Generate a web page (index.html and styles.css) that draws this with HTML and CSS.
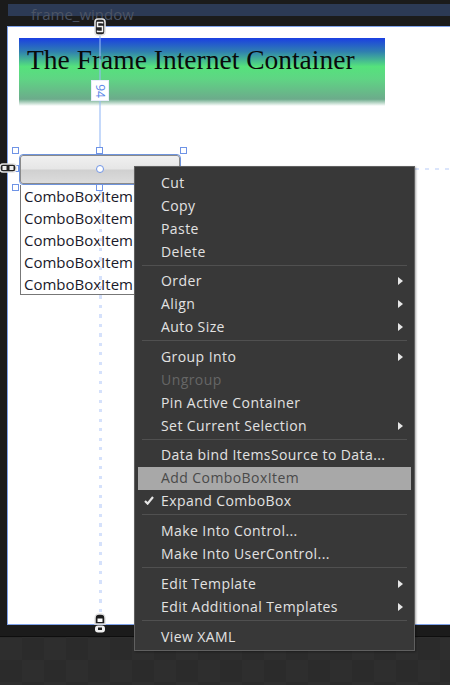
FILE: index.html
```html
<!DOCTYPE html>
<html lang="en">
<head>
<meta charset="utf-8">
<title>frame_window</title>
<link rel="stylesheet" href="styles.css">
</head>
<body>
<div class="stage">
  <div class="surface">
    <div class="title-strip"><span class="title-text">frame_window</span></div>
    <div class="artboard">
      <div class="banner"><h1 class="banner-title">The Frame Internet Container</h1></div>
      <div class="combo">
        <div class="combo-button"></div>
        <ul class="combo-list">
          <li>ComboBoxItem</li>
          <li>ComboBoxItem</li>
          <li>ComboBoxItem</li>
          <li>ComboBoxItem</li>
          <li>ComboBoxItem</li>
        </ul>
      </div>
    </div>
  </div>

  <div class="guide guide-top"></div>
  <div class="guide guide-bottom"></div>
  <div class="guide guide-right"></div>
  <div class="margin-badge"><span>94</span></div>

  <i class="handle h1"></i><i class="handle h2"></i><i class="handle h3"></i>
  <i class="handle h4"></i><i class="handle h5"></i><i class="handle h6"></i>
  <i class="center-dot"></i>

  <svg class="pin pin-top" viewBox="0 0 12 18" width="12" height="18"><rect x="1" y="1" width="10" height="16" rx="3" fill="#222" stroke="#e4e4e4" stroke-width="1.6"/><path d="M8.500 5.500V4.500H3.500V8.500H8.500V13.500H3.500V12.500" fill="none" stroke="#f4f4f4" stroke-width="1.500"/></svg>
  <svg class="pin pin-left" viewBox="0 0 17 10" width="17" height="10"><rect x="0" y="1" width="16" height="8" rx="3" fill="#222" stroke="#e4e4e4" stroke-width="1.4"/><path d="M2.500 3h4v4h-4zM9.500 3h4v4h-4z" fill="#eee"/></svg>
  <svg class="pin pin-bottom" viewBox="0 0 12 20" width="12" height="20"><path d="M1 11V5a4 4 0 0 1 4-4h2a4 4 0 0 1 4 4v6z" fill="#1c1c1c" stroke="#e4e4e4" stroke-width="1.5"/><rect x="3.500" y="5.500" width="5" height="3.500" fill="#fff"/><rect x="1" y="12.500" width="10" height="7" rx="3" fill="#f0f0f0"/><rect x="4" y="14.500" width="4" height="2.500" fill="#1c1c1c"/></svg>

  <div class="menu">
    <div class="row">Cut</div>
    <div class="row">Copy</div>
    <div class="row">Paste</div>
    <div class="row">Delete</div>
    <div class="sep"></div>
    <div class="row sub">Order</div>
    <div class="row sub">Align</div>
    <div class="row sub">Auto Size</div>
    <div class="sep wide"></div>
    <div class="row sub">Group Into</div>
    <div class="row off">Ungroup</div>
    <div class="row">Pin Active Container</div>
    <div class="row sub">Set Current Selection</div>
    <div class="sep"></div>
    <div class="row">Data bind ItemsSource to Data...</div>
    <div class="row hot">Add ComboBoxItem</div>
    <div class="row checked"><svg class="check" viewBox="0 0 10 9" width="10" height="9"><path d="M1 5l2.600 2.600L9 1" fill="none" stroke="#e6e6e6" stroke-width="2.200"/></svg>Expand ComboBox</div>
    <div class="sep wide"></div>
    <div class="row">Make Into Control...</div>
    <div class="row">Make Into UserControl...</div>
    <div class="sep wide"></div>
    <div class="row sub">Edit Template</div>
    <div class="row sub">Edit Additional Templates</div>
    <div class="sep wide"></div>
    <div class="row">View XAML</div>
  </div>
</div>
</body>
</html>
```
FILE: styles.css
```css
* { box-sizing: border-box; }
html, body { margin: 0; padding: 0; }
body { width: 450px; height: 685px; overflow: hidden; background: #2d2d2d; font-family: "Open Sans", "Noto Sans", sans-serif; }

.stage { position: relative; width: 450px; height: 685px; overflow: hidden;
  background-color: #2c2c2c;
  background-image: conic-gradient(#2e2e2e 25%, #2b2b2b 0 50%, #2e2e2e 0 75%, #2b2b2b 0);
  background-size: 44px 44px; }

.surface { height: 637px; background: #1b1b1b; border-bottom: 1px solid #0e0e0e; padding: 4px 0 0 7px; display: flex; flex-direction: column; }
.title-strip { height: 12px; margin-left: 1px; background: #2c3a55; flex: none; }
.title-text { display: block; margin-left: 23px; font-size: 15px; line-height: 20px; color: #4b5465; font-family: "Open Sans", sans-serif; }
.artboard { margin-top: 10px; height: 599px; background: #fff; border: 1px solid #7fa2ea; border-right: 0; padding: 11px 0 0 11px; }

.banner { width: 366px; height: 68px; padding: 5px 0 0 8px;
  background: linear-gradient(#1b3fe2 0%, #2f7fb0 20%, #55e27c 42%, #5fd584 60%, #6cab8b 90%, #fff 100%); }
.banner-title { margin: 0; font: 400 27.500px/34px "Liberation Serif", serif; color: #0a0a0a; white-space: nowrap; }

.combo { margin: 49px 0 0 1px; width: 160px; }
.combo-button { height: 29px; border: 1px solid #8a8a8a; border-radius: 3px; outline: 1px solid #6f94dc;
  background: linear-gradient(#f0f0f0 0%, #e6e6e6 48%, #d0d0d0 52%, #dcdcdc 100%); }
.combo-list { list-style: none; margin: 1px 0 0; padding: 1px 0 0 3px; width: 150px; height: 110px; border: 1px solid #777; border-top: 0; }
.combo-list li { height: 22px; font: 15px/21px "Open Sans", sans-serif; color: #1a1a2a; white-space: nowrap; }

.guide { position: absolute; }
.guide-top { left: 99px; top: 26px; width: 2px; height: 125px; background: rgba(150, 185, 245, .55); }
.guide-bottom { left: 98.500px; top: 191px; width: 3px; height: 425px; background: repeating-linear-gradient(#d5e1fb 0 3px, transparent 3px 9.500px); }
.guide-right { left: 415px; top: 168px; width: 35px; height: 2px; background: repeating-linear-gradient(90deg, #dbe5fb 0 4px, transparent 4px 10px); }

.margin-badge { position: absolute; left: 91px; top: 80px; width: 18px; height: 21px; background: #fff; border: 1px solid #e8eefb; display: flex; align-items: center; justify-content: center; }
.margin-badge span { display: block; transform: rotate(90deg); font-size: 12px; line-height: 12px; color: #5c88e8; }

.handle { position: absolute; width: 7px; height: 7px; background: #fff; border: 1.500px solid #6f94e6; }
.h1 { left: 12px; top: 147px; }
.h2 { left: 96px; top: 147px; }
.h3 { left: 180px; top: 147px; }
.h4 { left: 12px; top: 184px; }
.h5 { left: 96px; top: 184px; }
.h6 { left: 12px; top: 165px; }
.center-dot { position: absolute; left: 96px; top: 165px; width: 8px; height: 8px; border-radius: 50%; background: #fff; border: 1.500px solid #6f94e6; }

.pin { position: absolute; display: block; }
.pin-top { left: 94px; top: 18px; }
.pin-left { left: 0; top: 163px; }
.pin-bottom { left: 94px; top: 613px; }

.menu { position: absolute; left: 134px; top: 166px; width: 281px; height: 485px; padding: 5px 3px 0; background: #383838; border: 1px solid #606060; box-shadow: 1px 1px 2px rgba(0,0,0,.35); color: #e2e2e2; font-size: 14px; }
.row { position: relative; height: 23px; padding: 0 0 2px 23px; line-height: 21px; white-space: nowrap; letter-spacing: .42px; }
.sub::after { content: ""; position: absolute; right: 8px; top: 7px; border-left: 5px solid #e6e6e6; border-top: 4px solid transparent; border-bottom: 4px solid transparent; }
.off { color: #666; }
.hot { background: #a8a8a8; color: #4a4a4a; }
.check { position: absolute; left: 6px; top: 6px; }
.sep { height: 6px; padding-top: 1px; margin: 0 4px; }
.sep.wide { height: 7px; }
.sep::before { content: ""; display: block; height: 1px; background: #505050; }
```
